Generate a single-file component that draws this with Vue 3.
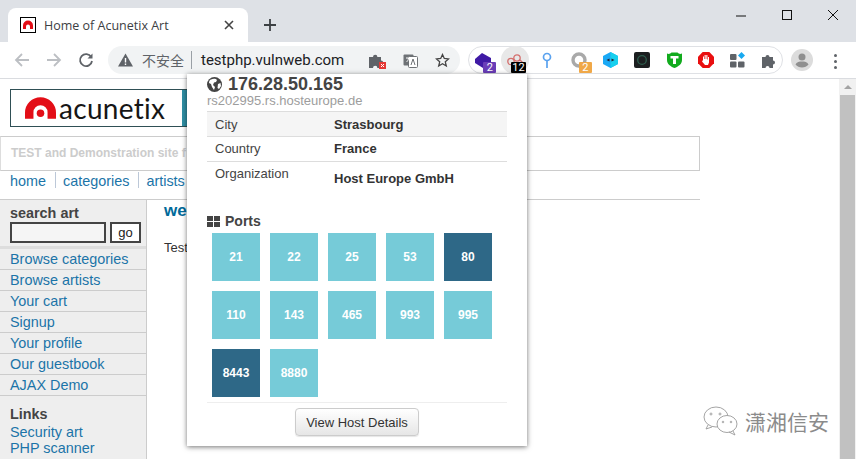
<script setup>
const sideLinks = ['Browse categories', 'Browse artists', 'Your cart', 'Signup', 'Your profile', 'Our guestbook', 'AJAX Demo']
const ports = [
  { n: 21 }, { n: 22 }, { n: 25 }, { n: 53 }, { n: 80, dark: true },
  { n: 110 }, { n: 143 }, { n: 465 }, { n: 993 }, { n: 995 },
  { n: 8443, dark: true }, { n: 8880 }
]
const info = [
  { k: 'City', v: 'Strasbourg' },
  { k: 'Country', v: 'France' },
  { k: 'Organization', v: 'Host Europe GmbH' }
]
</script>

<template>
  <div class="screen">
    <div class="tabstrip">
      <div class="tab">
        <svg class="favicon" width="16" height="16" viewBox="0 0 16 16">
          <rect x="0.5" y="0.5" width="15" height="15" fill="#fff" stroke="#000" />
          <path d="M3 12V8.5a5 5 0 0 1 10 0V12h-3V9.5a2 2 0 0 0-4 0V12z" fill="#e30e17" />
        </svg>
        <span class="tab-title">Home of Acunetix Art</span>
        <svg class="tab-x" width="10" height="10" viewBox="0 0 10 10"><path d="M1 1l8 8M9 1l-8 8" stroke="#444" stroke-width="1.6" /></svg>
      </div>
      <svg class="plus" width="14" height="14" viewBox="0 0 14 14"><path d="M7 1v12M1 7h12" stroke="#3c4043" stroke-width="1.8" /></svg>
      <div class="win-btns">
        <svg width="12" height="12" viewBox="0 0 12 12"><path d="M1 7h10" stroke="#111" /></svg>
        <svg width="12" height="12" viewBox="0 0 12 12"><rect x="1.5" y="1.5" width="9" height="9" fill="none" stroke="#111" /></svg>
        <svg width="12" height="12" viewBox="0 0 12 12"><path d="M1 1l10 10M11 1L1 11" stroke="#111" /></svg>
      </div>
    </div>

    <div class="toolbar">
      <svg class="nav-ic" width="16" height="16" viewBox="0 0 16 16"><path d="M15 8H2M8 2L2 8l6 6" fill="none" stroke="#bcbfc3" stroke-width="1.8" /></svg>
      <svg class="nav-ic" width="16" height="16" viewBox="0 0 16 16"><path d="M1 8h13M8 2l6 6-6 6" fill="none" stroke="#bcbfc3" stroke-width="1.8" /></svg>
      <svg class="nav-ic" width="16" height="16" viewBox="0 0 16 16"><path d="M13.2 5A6 6 0 1 0 14 9" fill="none" stroke="#5f6368" stroke-width="1.8" /><path d="M14.5 1.5v5h-5z" fill="#5f6368" /></svg>

      <div class="omnibox">
        <svg width="15" height="14" viewBox="0 0 15 14"><path d="M7.5 0.5L15 13.5H0z" fill="#5f6368" /><path d="M7.5 5v4.5M7.5 10.5v1.5" stroke="#fff" stroke-width="1.4" /></svg>
        <span class="insecure">不安全</span>
        <span class="omni-sep"></span>
        <span class="url">testphp.vulnweb.com</span>
        <svg class="omni-puzzle" width="17" height="17" viewBox="0 0 17 17">
          <path d="M0 5h4a2.200 2.200 0 1 1 4.400 0H12v3.500a2.200 2.200 0 1 1 0 4.400V16H8.400a2.200 2.200 0 1 0-4.400 0H0z" fill="#5f6368" />
          <rect x="10" y="10" width="7" height="7" fill="#e53935" />
          <path d="M12 12l3 3M15 12l-3 3" stroke="#fff" />
        </svg>
        <svg class="omni-trans" width="15" height="15" viewBox="0 0 15 15">
          <rect x="0.500" y="1.500" width="10" height="11" rx="1" fill="#6e7276" />
          <rect x="5.500" y="3.500" width="9" height="11" rx="1" fill="#fff" stroke="#6e7276" />
          <path d="M8 12l2-6 2 6" fill="none" stroke="#6e7276" />
          <path d="M3 5h5M5.500 5c0 2-1 3-2 4" fill="none" stroke="#fff" />
        </svg>
        <svg class="omni-star" width="15" height="15" viewBox="0 0 15 15"><path d="M7.500 1.500l1.800 4 4.300.4-3.300 2.900 1 4.200-3.800-2.200-3.800 2.200 1-4.200L1.400 5.900l4.300-.4z" fill="none" stroke="#444" stroke-width="1.300" /></svg>
      </div>

      <div class="ext-pill">
        <div class="ext">
          <svg width="16" height="15" viewBox="0 0 16 15"><path d="M7 0l9 5v4l-8 6-8-5V6z" fill="#3f1aa5" /></svg>
          <span class="badge badge-purple">2</span>
        </div>
        <div class="ext">
          <span class="ext-hover"></span>
          <svg class="ext-ic" width="16" height="12" viewBox="0 0 16 12"><circle cx="4" cy="7.500" r="3.200" fill="none" stroke="#d4706e" stroke-width="1.300" /><circle cx="10" cy="4" r="3.200" fill="none" stroke="#d4706e" stroke-width="1.300" /><path d="M13 6l3 3" stroke="#d4706e" stroke-width="1.300" /></svg>
          <span class="badge badge-black">12</span>
        </div>
        <div class="ext">
          <svg width="10" height="16" viewBox="0 0 10 16"><circle cx="5" cy="5" r="3.500" fill="none" stroke="#5aa2ef" stroke-width="1.700" /><path d="M5 8.500V16" stroke="#5aa2ef" stroke-width="1.700" /></svg>
        </div>
        <div class="ext">
          <svg width="16" height="16" viewBox="0 0 16 16"><circle cx="8" cy="8" r="6" fill="none" stroke="#a9a9a9" stroke-width="3.400" /></svg>
          <span class="badge badge-orange">2</span>
        </div>
        <div class="ext">
          <svg width="15" height="16" viewBox="0 0 15 16"><path d="M7.500 0L15 4v8l-7.500 4L0 12V4z" fill="#1aa9f5" /><path d="M7.500 0L15 4v8l-7.500 4z" fill="#17d0ee" /><path d="M3.500 8l3-1.500v3zM11.500 8l-3-1.500v3z" fill="#223" /></svg>
        </div>
        <div class="ext">
          <svg width="16" height="16" viewBox="0 0 16 16"><rect width="16" height="16" rx="2" fill="#1c1f20" /><circle cx="8" cy="8" r="4.300" fill="none" stroke="#2e5d4d" stroke-width="1.300" /></svg>
        </div>
        <div class="ext">
          <svg width="15" height="16" viewBox="0 0 15 16"><path d="M0 1.500c2 1 3.500 0 4.500-1h6c1 1 2.500 2 4.500 1V8c0 4-3.500 6.500-7.500 8C3.500 14.500 0 12 0 8z" fill="#12ab1e" /><path d="M3.500 4h8v2.500H9v5.500H6V6.500H3.500z" fill="#fff" /></svg>
        </div>
        <div class="ext">
          <svg width="16" height="16" viewBox="0 0 16 16"><path d="M4.700 0h6.600L16 4.700v6.600L11.300 16H4.700L0 11.300V4.700z" fill="#e90f10" /><path d="M5 8V4.500h1V7h.600V3h1.100v4h.6V3h1.100v4.500h.6V5h1v5.500L10 13H7L4 9.500z" fill="#fff" /></svg>
        </div>
        <div class="ext">
          <svg width="16" height="16" viewBox="0 0 16 16"><rect y="2" width="6.500" height="6" rx="1" fill="#5f6368" /><rect y="9.500" width="6.500" height="6" rx="1" fill="#5f6368" /><rect x="8" y="9.500" width="6.500" height="6" rx="1" fill="#5f6368" /><path d="M11.500 0l3.500 3.500-3.500 3.500L8 3.500z" fill="#18a9f0" /></svg>
        </div>
        <div class="ext">
          <svg width="15" height="15" viewBox="0 0 15 15"><path d="M0 4h3.500a2 2 0 1 1 4 0H11v3.500a2 2 0 1 1 0 4V15H7.500a2 2 0 1 0-4 0H0z" fill="#5f6368" /></svg>
        </div>
      </div>

      <svg class="avatar" width="22" height="22" viewBox="0 0 22 22">
        <circle cx="11" cy="11" r="11" fill="#dcdcdc" />
        <circle cx="11" cy="8" r="3.500" fill="#8f8f8f" />
        <path d="M4.500 15.500c1-2.500 4-3 6.500-3s5.500.5 6.500 3c-1.500 2-4 3-6.500 3s-5-1-6.500-3z" fill="#8f8f8f" />
      </svg>
      <div class="kebab"><i></i><i></i><i></i></div>
    </div>

    <div class="viewport">
      <div class="page">
        <div class="logo-box">
          <div class="logo">
            <svg width="31" height="22" viewBox="0 0 33 23"><path d="M0 23V16.500a16.500 16.500 0 0 1 33 0V23H24V16a7.500 7.500 0 0 0-15 0v7z" fill="#e30e17" /><circle cx="16.500" cy="17" r="4" fill="#e30e17" /></svg>
            <span class="logo-text">acunetix</span>
          </div>
          <div class="logo-pic"></div>
        </div>
        <div class="tagline">TEST and Demonstration site f</div>
        <div class="topnav">
          <a>home</a><a>categories</a><a>artists</a>
        </div>
        <div class="columns">
          <aside class="side">
            <div class="search">
              <b>search art</b>
              <div class="search-row">
                <span class="search-input"></span>
                <span class="search-go">go</span>
              </div>
            </div>
            <a v-for="l in sideLinks" :key="l" class="side-link">{{ l }}</a>
            <div class="links">
              <b>Links</b>
              <a>Security art</a>
              <a>PHP scanner</a>
            </div>
          </aside>
          <main class="body">
            <h2>we</h2>
            <p>Test</p>
          </main>
        </div>
      </div>

      <div class="scrollbar">
        <div class="scroll-btn"></div>
        <div class="scroll-thumb"></div>
      </div>

      <div class="watermark">
        <svg width="38" height="32" viewBox="0 0 38 32" fill="none" stroke="#9a9a9a" stroke-width="0.900">
          <ellipse cx="14" cy="12" rx="12" ry="10" />
          <path d="M6 20l-2 4 6-2" />
          <ellipse cx="25" cy="19" rx="10" ry="8.500" fill="#fff" />
          <path d="M31 26l2 4-6-3" />
          <circle cx="9" cy="9" r="1" /><circle cx="18" cy="9" r="1" />
          <circle cx="21" cy="17" r="0.800" /><circle cx="29" cy="17" r="0.800" />
        </svg>
        <span>潇湘信安</span>
      </div>
    </div>

    <div class="popup">
      <div class="ip-line">
        <svg width="15" height="15" viewBox="0 0 15 15"><circle cx="7.500" cy="7.500" r="7.500" fill="#444" /><path d="M4 2.500c2-1 5-1 6 .5l-1 2-2 .5L6 8l2 2-1 3-2-3-1-3-2-1c0-2 1-3.500 2-3.500zM11 7l2.500-1 .5 3-2 3-1.500-1z" fill="#fff" /></svg>
        <span>176.28.50.165</span>
      </div>
      <div class="hostname">rs202995.rs.hosteurope.de</div>
      <div class="info">
        <div v-for="row in info" :key="row.k" class="info-row">
          <span class="info-k">{{ row.k }}</span>
          <span class="info-v">{{ row.v }}</span>
        </div>
      </div>
      <div class="ports-title">
        <svg width="13" height="11" viewBox="0 0 13 11"><path d="M0 0h6v5H0zM7 0h6v5H7zM0 6h6v5H0zM7 6h6v5H7z" fill="#444" /></svg>
        <span>Ports</span>
      </div>
      <div class="ports">
        <div v-for="p in ports" :key="p.n" class="port" :class="{ dark: p.dark }">{{ p.n }}</div>
      </div>
      <div class="popup-foot">
        <button>View Host Details</button>
      </div>
    </div>
  </div>
</template>

<style scoped>
.screen {
  position: relative;
  width: 856px;
  height: 459px;
  overflow: hidden;
  display: flex;
  flex-direction: column;
  background: #fff;
  font-family: "Liberation Sans", Arial, sans-serif;
}

.tabstrip {
  height: 42px;
  flex: none;
  background: #dee1e6;
  display: flex;
  align-items: flex-start;
  padding: 8px 0 0 8px;
  box-sizing: border-box;
}
.tab {
  width: 240px;
  height: 34px;
  background: #fff;
  border-radius: 8px 8px 0 0;
  display: flex;
  align-items: center;
  padding: 0 11px 0 12px;
  box-sizing: border-box;
}
.tab-title {
  margin-left: 8px;
  font: 12.500px "Open Sans", sans-serif;
  color: #3c4043;
  flex: 1;
  white-space: nowrap;
}
.tab-x {
  margin-right: 3px;
}
.plus {
  margin: 10px 0 0 15px;
}
.win-btns {
  margin-left: auto;
  display: flex;
  gap: 34px;
  padding: 1px 17px 0 0;
}

.toolbar {
  height: 37px;
  flex: none;
  box-sizing: border-box;
  border-bottom: 1px solid #dadce0;
  display: flex;
  align-items: flex-start;
  padding: 4px 0 0 14px;
  background: #fff;
}
.nav-ic {
  margin: 6px 16px 0 0;
}
.omnibox {
  width: 352px;
  height: 28px;
  margin-left: -2px;
  border-radius: 14px;
  background: #f1f3f4;
  display: flex;
  align-items: center;
  padding-left: 10px;
  box-sizing: border-box;
}
.insecure {
  margin-left: 9px;
  font: 14px "Noto Sans CJK SC", sans-serif;
  color: #5f6368;
}
.omni-sep {
  width: 1px;
  height: 18px;
  background: #9aa0a6;
  margin: 0 9px 0 7px;
}
.url {
  font: 15px Roboto, sans-serif;
  color: #202124;
}
.omni-puzzle {
  margin-left: 25px;
}
.omni-trans {
  margin-left: 17px;
}
.omni-star {
  margin-left: 17px;
}
.ext-pill {
  width: 315px;
  height: 28px;
  margin-left: 8px;
  box-sizing: border-box;
  border: 1px solid #dfe1e5;
  border-radius: 14px;
  display: flex;
  align-items: center;
}
.ext {
  position: relative;
  width: 31.800px;
  height: 26px;
  flex: none;
  display: flex;
  align-items: center;
  justify-content: center;
}
.ext:first-child {
  margin-left: -1.600px;
}
.ext-hover {
  position: absolute;
  left: 2px;
  top: -1px;
  width: 28px;
  height: 28px;
  border-radius: 50%;
  background: #e8e8e8;
}
.ext-ic {
  position: relative;
}
.badge {
  position: absolute;
  left: 16px;
  top: 15px;
  height: 11px;
  min-width: 11px;
  padding: 0 1px;
  border-radius: 1px;
  color: #fff;
  font: 11px/12px Roboto, sans-serif;
  text-align: center;
}
.badge-purple { background: #6a3db8; }
.badge-black { background: #000; left: 12px; }
.badge-orange { background: #f0a848; }
.avatar {
  margin: 3px 0 0 8px;
}
.kebab {
  margin: 8px 0 0 21px;
  display: flex;
  flex-direction: column;
  gap: 3px;
}
.kebab i {
  width: 3px;
  height: 3px;
  border-radius: 50%;
  background: #5f6368;
}

.viewport {
  flex: 1;
  display: flex;
  position: relative;
  min-height: 0;
}
.page {
  flex: 1;
  min-width: 0;
  padding-top: 10px;
  font-size: 12px;
}
.logo-box {
  margin-left: 10px;
  width: 400px;
  height: 38px;
  box-sizing: border-box;
  border: 1px solid #2f4f55;
  display: flex;
}
.logo {
  width: 171px;
  display: flex;
  align-items: center;
  padding-left: 14px;
  box-sizing: border-box;
  gap: 3px;
}
.logo-text {
  font: 28px/1 Lato, sans-serif;
  color: #161616;
  letter-spacing: 0.300px;
}
.logo-pic {
  flex: 1;
  background: linear-gradient(100deg, #2f8fa5, #4a9a94);
}
.tagline {
  width: 700px;
  height: 35px;
  margin-top: 9px;
  box-sizing: border-box;
  border: 1px solid #ccc;
  border-left-color: #ddd;
  padding-left: 10px;
  font: bold 12px/33px "Liberation Sans", sans-serif;
  color: #ccc;
  white-space: nowrap;
  overflow: hidden;
}
.topnav {
  width: 700px;
  height: 29px;
  box-sizing: border-box;
  border-bottom: 1px solid #ccc;
  padding: 1px 0 0 10px;
  display: flex;
  font-size: 14.400px;
  line-height: 18px;
}
.topnav a {
  color: #1b74a8;
  height: 16px;
}
.topnav a + a {
  margin-left: 9px;
  padding-left: 7px;
  border-left: 1px solid #bcc8d8;
}

.columns {
  display: flex;
  height: 260px;
}
.side {
  width: 147px;
  flex: none;
  box-sizing: border-box;
  background: #eee;
  border-right: 1px solid #ccc;
  display: flex;
  flex-direction: column;
}
.search {
  height: 49px;
  flex: none;
  box-sizing: border-box;
  padding: 6px 0 0 10px;
  border-bottom: 3px solid #ddd;
  color: #444;
  font-size: 14.400px;
  line-height: 15px;
}
.search b {
  display: block;
}
.search-row {
  display: flex;
  gap: 4px;
  margin-top: 1px;
}
.search-input,
.search-go {
  height: 21px;
  box-sizing: border-box;
  border: 2px solid #444;
  background: #f5f5f5;
}
.search-input {
  width: 96px;
}
.search-go {
  width: 31px;
  background: #fff;
  text-align: center;
  font-size: 13px;
  line-height: 17px;
  color: #222;
}
.side-link {
  height: 21px;
  flex: none;
  box-sizing: border-box;
  border-bottom: 1px solid #ccc;
  padding-left: 10px;
  font-size: 14.400px;
  line-height: 20px;
  color: #1b74a8;
}
.links {
  padding: 10px 0 0 10px;
  font-size: 14.400px;
  line-height: 16px;
  display: flex;
  flex-direction: column;
}
.links b {
  color: #444;
  margin-bottom: 2px;
}
.links a {
  color: #1b74a8;
}
.body {
  padding: 2px 0 0 17px;
}
.body h2 {
  margin: 0;
  font: bold 17px/18px "Liberation Sans", sans-serif;
  color: #006a9a;
}
.body p {
  margin: 20px 0 0;
  font-size: 13px;
  line-height: 15px;
  color: #333;
}

.scrollbar {
  width: 17px;
  flex: none;
  background: #f1f1f1;
  display: flex;
  flex-direction: column;
  align-items: center;
}
.scroll-btn {
  width: 0;
  height: 0;
  margin: 6px 0 6px;
  border-left: 4px solid transparent;
  border-right: 4px solid transparent;
  border-bottom: 4px solid #a3a3a3;
}
.scroll-thumb {
  flex: 1;
  width: 15px;
  background: #c1c1c1;
}

.watermark {
  position: absolute;
  right: 27px;
  bottom: 22px;
  display: flex;
  align-items: center;
  gap: 5px;
  font: 21px/1 "Noto Sans CJK SC", sans-serif;
  color: #8b8b8b;
}

.popup {
  position: absolute;
  left: 187px;
  top: 74px;
  width: 340px;
  height: 372px;
  box-sizing: border-box;
  background: #fff;
  box-shadow: 0 1px 5px rgba(0, 0, 0, 0.55);
  padding: 0 20px;
  color: #333;
}
.ip-line {
  display: flex;
  align-items: center;
  gap: 6px;
  height: 20px;
  font: bold 18px/20px "Liberation Sans", sans-serif;
  color: #444;
}
.hostname {
  font-size: 13px;
  line-height: 14px;
  color: #9d9d9d;
}
.info {
  margin-top: 3px;
  border-top: 1px solid #ddd;
}
.info-row {
  display: grid;
  grid-template-columns: 119px 1fr;
  height: 25px;
  box-sizing: border-box;
  border-bottom: 1px solid #ddd;
  padding: 4px 0 0 8px;
  font-size: 13px;
  line-height: 15px;
}
.info-row:first-child {
  background: #f5f5f5;
  padding-top: 5px;
}
.info-row:last-child {
  border-bottom: none;
  height: 44px;
}
.info-k {
  color: #444;
}
.info-v {
  font-weight: bold;
  color: #333;
}
.info-row:last-child .info-v {
  padding-top: 5px;
}
.ports-title {
  display: flex;
  align-items: center;
  gap: 5px;
  margin-top: 7px;
  height: 16px;
  font: bold 14px/16px "Liberation Sans", sans-serif;
  color: #444;
}
.ports {
  display: grid;
  grid-template-columns: repeat(5, 48px);
  grid-auto-rows: 48px;
  gap: 10px;
  height: 169px;
  padding: 4px 0 0 5px;
}
.port {
  background: #76cbd8;
  color: #fff;
  font: bold 12px/48px "Liberation Sans", sans-serif;
  text-align: center;
}
.port.dark {
  background: #2e6887;
}
.popup-foot {
  border-top: 1px solid #eee;
  padding-top: 5px;
  text-align: center;
}
.popup-foot button {
  width: 124px;
  height: 28px;
  padding: 0;
  box-sizing: border-box;
  border: 1px solid #ccc;
  border-radius: 4px;
  background: linear-gradient(#fff, #e6e6e6);
  box-shadow: 0 1px 1px rgba(0, 0, 0, 0.1);
  font: 13px "Liberation Sans", sans-serif;
  color: #333;
}
</style>
